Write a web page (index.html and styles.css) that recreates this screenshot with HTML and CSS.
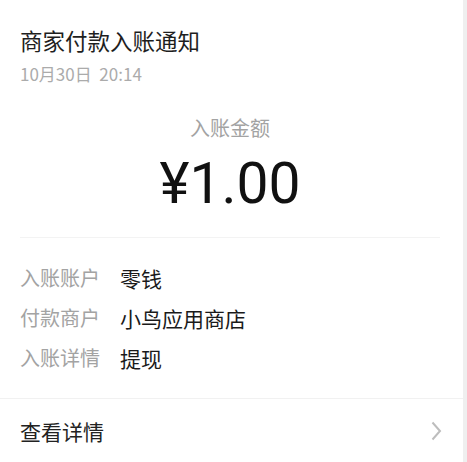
FILE: index.html
```html
<!DOCTYPE html>
<html lang="zh-CN">
<head>
<meta charset="utf-8">
<link rel="stylesheet" href="styles.css">
</head>
<body>
<div class="page">
  <div class="card">
    <div class="head">
      <div class="title">商家付款入账通知</div>
      <div class="date">10月30日&nbsp;&nbsp;20:14</div>
    </div>
    <div class="amount">
      <div class="amount-label">入账金额</div>
      <div class="amount-value">¥1.00</div>
    </div>
    <div class="rows">
      <div class="row"><span class="k">入账账户</span><span class="v">零钱</span></div>
      <div class="row"><span class="k">付款商户</span><span class="v">小鸟应用商店</span></div>
      <div class="row"><span class="k">入账详情</span><span class="v">提现</span></div>
    </div>
    <div class="more">
      <span class="more-text">查看详情</span>
      <svg class="chev" width="11" height="20" viewBox="0 0 11 20"><path d="M1.5 1.5 L9 10 L1.5 18.5" fill="none" stroke="#bdbdbd" stroke-width="2"/></svg>
    </div>
  </div>
</div>
</body>
</html>
```
FILE: styles.css
```css
* { box-sizing: border-box; margin: 0; padding: 0; }
html, body { width: 467px; height: 462px; background: #fff; }
body { font-family: "Noto Sans CJK SC", "Noto Sans", sans-serif; color: #222; overflow: hidden; }
.page { display: flex; height: 462px; border-right: 4px solid #efefef; }
.card { flex: 1; display: flex; flex-direction: column; }
.head { padding: 24px 20px 0 20px; }
.title { font-size: 22.5px; line-height: 32px; color: #1e1e1e; }
.date { font-size: 17px; line-height: 24px; color: #ababab; margin-top: 6px; }
.amount { margin: 28px 23px 0 20px; display: flex; flex-direction: column; align-items: center; border-bottom: 1px solid #f3f3f3; padding-bottom: 21px; }
.amount-label { font-size: 20px; line-height: 28px; color: #a3a3a3; }
.amount-value { font-family: Roboto, "Noto Sans", sans-serif; font-size: 57px; line-height: 64px; color: #111; margin-top: 10px; }
.rows { padding: 26px 20px 26px 20px; display: flex; flex-direction: column; gap: 12px; border-bottom: 1px solid #f1f1f1; }
.row { display: flex; align-items: center; height: 28px; }
.k { color: #a3a3a3; width: 100px; font-size: 20px; line-height: 28px; }
.v { color: #1a1a1a; font-size: 21px; line-height: 28px; }
.more { display: flex; align-items: center; justify-content: space-between; padding: 0 20px; height: 68px; }
.more-text { font-size: 21px; color: #222; }
.chev { margin-right: 1px; }
```
